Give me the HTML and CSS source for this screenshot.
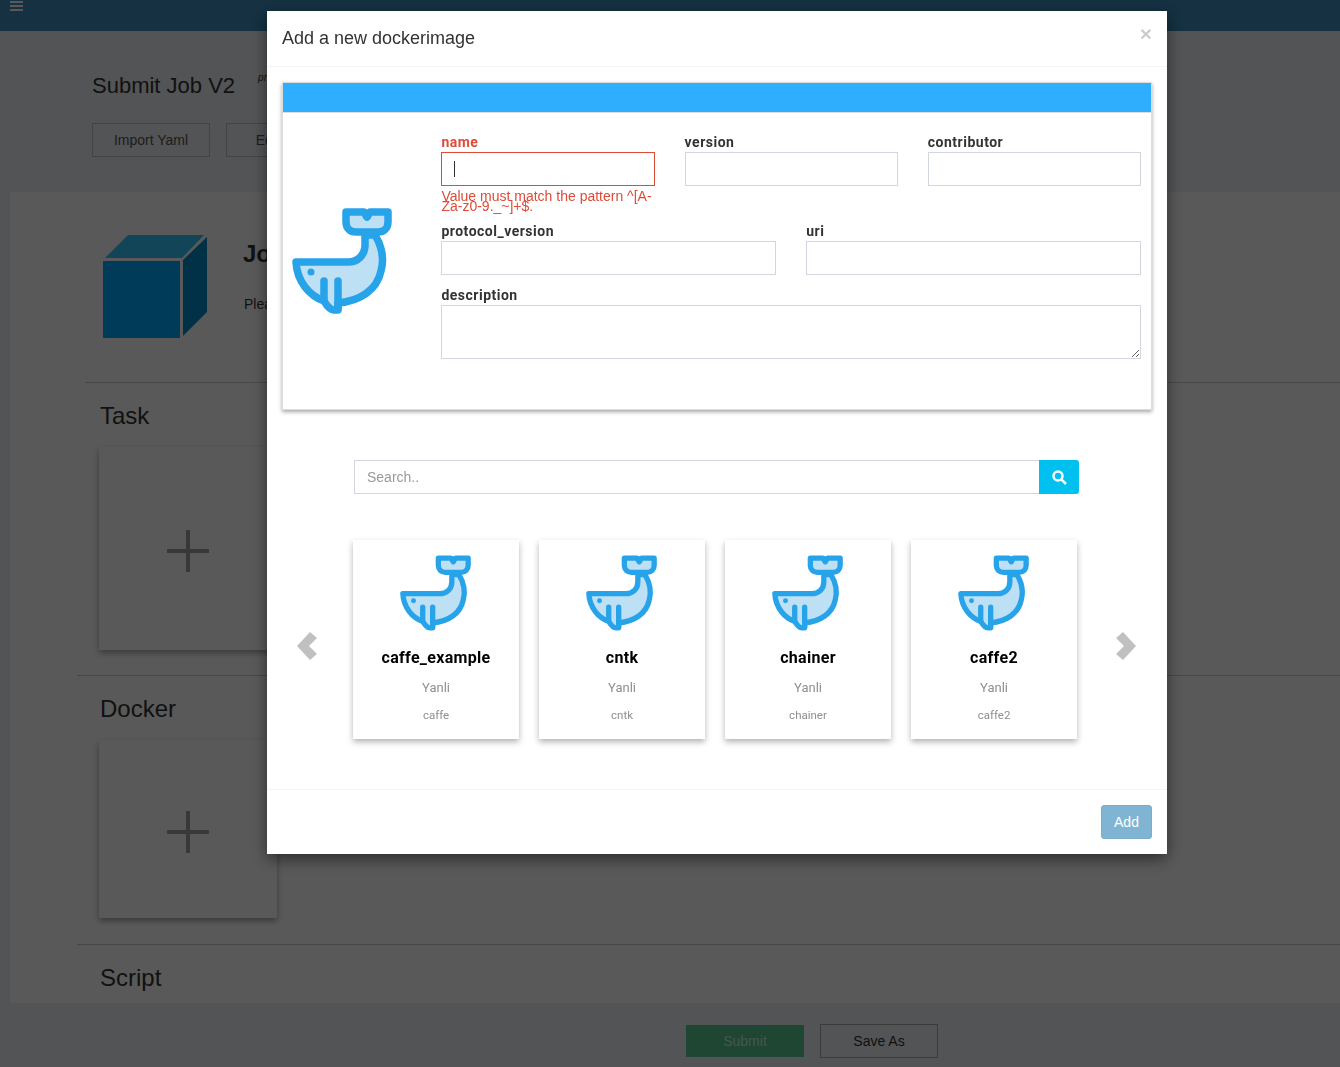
FILE: index.html
```html
<!DOCTYPE html>
<html lang="en">
<head>
    <meta charset="UTF-8">
    <meta name="viewport" content="width=device-width, initial-scale=1.0">
    <title>Submit Job V2</title>
    <link rel="stylesheet" href="styles.css">
</head>
<body>
    <svg class="sprites" aria-hidden="true">
        <symbol id="whale" viewBox="0 0 100 106">
            <path class="whale-part" d="M4 54H56C66 54 73 47 73 37V27H83C91 40 92 52 89 63C85 82 68 93 46 95V102H42C38 102 35 98 32 93C18 88 5 74 4 54Z"/>
            <path class="whale-part" d="M54 4H72C73 4 73 7 75 9C77 7 77 4 78 4H96V14C96 20 92 24 86 24H64C58 24 54 20 54 14Z"/>
            <path class="whale-line" d="M32 73V92M46 73V100"/>
            <circle class="whale-eye" cx="19" cy="64" r="3.5"/>
        </symbol>
        <symbol id="plus" viewBox="0 0 42 42">
            <path d="M0 19H42V23H0ZM19 0H23V42H19Z"/>
        </symbol>
    </svg>

    <div class="page">
        <header class="topbar">
            <div class="hamburger"><span></span><span></span><span></span></div>
        </header>

        <div class="title-row">
            <h1>Submit Job V2</h1>
            <small>preview</small>
        </div>
        <div class="tool-row">
            <button class="btn-line">Import Yaml</button>
            <button class="btn-line">Edit Yaml</button>
        </div>

        <div class="panel">
            <div class="intro">
                <svg class="cube" width="105" height="103" viewBox="0 0 105 103">
                    <polygon class="cube-top" points="3,23 26,0 102,0 80,23"/>
                    <polygon class="cube-front" points="1,26 78,26 78,103 1,103"/>
                    <polygon class="cube-side" points="81,25 105,2 105,77 81,101"/>
                </svg>
                <div class="intro-text">
                    <h2>Job</h2>
                    <p>Please</p>
                </div>
            </div>

            <section class="section section-task">
                <h3>Task</h3>
                <div class="add-card"><svg width="42" height="42"><use href="#plus"/></svg></div>
            </section>
            <section class="section section-docker">
                <h3>Docker</h3>
                <div class="add-card"><svg width="42" height="42"><use href="#plus"/></svg></div>
            </section>
            <section class="section">
                <h3>Script</h3>
            </section>
        </div>

        <div class="actions">
            <button class="btn-submit">Submit</button>
            <button class="btn-line btn-save">Save As</button>
        </div>
    </div>

    <div class="overlay">
        <div class="modal">
            <div class="modal-header">
                <h4>Add a new dockerimage</h4>
                <span class="close">&times;</span>
            </div>

            <div class="modal-body">
                <div class="image-card">
                    <div class="image-card-bar"></div>
                    <div class="image-card-body">
                        <svg class="whale-big" width="100" height="106"><use href="#whale"/></svg>
                        <form class="image-form">
                            <div class="form-row row-3">
                                <div class="field field-error">
                                    <label>name</label>
                                    <div class="input-wrap">
                                        <input type="text">
                                        <span class="caret"></span>
                                    </div>
                                    <p class="error-text">Value must match the pattern ^[A-Za-z0-9._~]+$.</p>
                                </div>
                                <div class="field">
                                    <label>version</label>
                                    <input type="text">
                                </div>
                                <div class="field">
                                    <label>contributor</label>
                                    <input type="text">
                                </div>
                            </div>
                            <div class="form-row row-2">
                                <div class="field">
                                    <label>protocol_version</label>
                                    <input type="text">
                                </div>
                                <div class="field">
                                    <label>uri</label>
                                    <input type="text">
                                </div>
                            </div>
                            <div class="field">
                                <label>description</label>
                                <textarea></textarea>
                            </div>
                        </form>
                    </div>
                </div>

                <div class="search">
                    <input type="text" placeholder="Search..">
                    <button class="search-btn" aria-label="Search">
                        <svg width="15" height="15" viewBox="0 0 15 15">
                            <circle cx="6" cy="6" r="4.500"/>
                            <path d="M9.300 9.300L14 14"/>
                        </svg>
                    </button>
                </div>

                <div class="carousel">
                    <svg class="arrow" width="20" height="28" viewBox="0 0 20 28">
                        <polygon points="13,0 0,14 13,28 20,22 12,14 20,6"/>
                    </svg>
                    <div class="image-list">
                        <div class="image-item">
                            <svg width="71" height="76"><use href="#whale"/></svg>
                            <h5>caffe_example</h5>
                            <div class="item-author">Yanli</div>
                            <div class="item-desc">caffe</div>
                        </div>
                        <div class="image-item">
                            <svg width="71" height="76"><use href="#whale"/></svg>
                            <h5>cntk</h5>
                            <div class="item-author">Yanli</div>
                            <div class="item-desc">cntk</div>
                        </div>
                        <div class="image-item">
                            <svg width="71" height="76"><use href="#whale"/></svg>
                            <h5>chainer</h5>
                            <div class="item-author">Yanli</div>
                            <div class="item-desc">chainer</div>
                        </div>
                        <div class="image-item">
                            <svg width="71" height="76"><use href="#whale"/></svg>
                            <h5>caffe2</h5>
                            <div class="item-author">Yanli</div>
                            <div class="item-desc">caffe2</div>
                        </div>
                    </div>
                    <svg class="arrow arrow-next" width="20" height="28" viewBox="0 0 20 28">
                        <polygon points="7,0 20,14 7,28 0,22 8,14 0,6"/>
                    </svg>
                </div>
            </div>

            <div class="modal-footer">
                <button class="btn-add">Add</button>
            </div>
        </div>
    </div>
</body>
</html>
```

FILE: styles.css
```css
* {
    box-sizing: border-box;
}
html, body {
    height: 100%;
}
body {
    margin: 0;
    overflow: hidden;
    font-family: "Liberation Sans", Arial, sans-serif;
    font-size: 14px;
    color: #333;
    background: #ecf0f5;
}
.sprites {
    display: none;
}
.whale-part {
    fill: #bde0f5;
    stroke: #27a3ea;
    stroke-width: 7.5;
    stroke-linejoin: round;
}
.whale-line {
    fill: none;
    stroke: #27a3ea;
    stroke-width: 7.5;
    stroke-linecap: round;
}
.whale-eye {
    fill: #27a3ea;
}

/* page behind the dialog */
.topbar {
    height: 31px;
    background: #3c8dbc;
}
.hamburger {
    display: flex;
    flex-direction: column;
    gap: 2px;
    width: 13px;
    margin-left: 10px;
    padding-top: 1px;
}
.hamburger span {
    height: 2px;
    background: #fff;
}
.title-row {
    display: flex;
    align-items: flex-start;
    margin: 41px 0 0 92px;
    height: 51px;
}
.title-row h1 {
    margin: 0;
    font-size: 22px;
    font-weight: 400;
    line-height: 27px;
}
.title-row small {
    margin: 0 0 0 23px;
    font-size: 10px;
    font-style: italic;
    line-height: 12px;
}
.tool-row {
    display: flex;
    gap: 16px;
    margin-left: 92px;
}
.btn-line {
    width: 118px;
    height: 34px;
    padding: 0;
    font-family: inherit;
    font-size: 14px;
    color: #555;
    background: transparent;
    border: 1px solid #c4c4c4;
}
.btn-save {
    color: #333;
    border-color: #aaa;
}
.panel {
    height: 811px;
    margin: 35px 0 0 10px;
    background: #fff;
}
.intro {
    display: flex;
    height: 191px;
    margin-left: 75px;
    padding: 43px 0 0 17px;
    border-bottom: 1px solid #ccc;
}
.intro-text {
    margin-left: 37px;
}
.intro-text h2 {
    margin: 2px 0 0 -1px;
    font-size: 24px;
    line-height: 33px;
}
.intro-text p {
    margin: 26px 0 0;
    font-size: 14px;
}
.cube-front {
    fill: #00abff;
}
.cube-top {
    fill: #36c5fb;
}
.cube-side {
    fill: #008ccb;
}
.section {
    margin-left: 67px;
    padding: 19px 0 0 22px;
}
.section-task {
    height: 292px;
}
.section-docker {
    height: 270px;
    border-top: 1px solid #ccc;
    border-bottom: 1px solid #ccc;
}
.section h3 {
    margin: 0;
    font-size: 24px;
    font-weight: 400;
    line-height: 27px;
    text-indent: 1px;
}
.add-card {
    display: flex;
    align-items: center;
    justify-content: center;
    width: 178px;
    height: 203px;
    margin-top: 18px;
    padding-top: 5px;
    background: #fff;
    box-shadow: 0 3px 6px rgba(0, 0, 0, 0.35);
    fill: #a0a0a0;
}
.section-docker .add-card {
    height: 178px;
}
.actions {
    display: flex;
    align-items: center;
    justify-content: center;
    gap: 16px;
    margin-top: 21px;
    padding-left: 284px;
}
.btn-submit {
    width: 118px;
    height: 32px;
    padding: 0;
    font-family: inherit;
    font-size: 14px;
    color: #c5f6dc;
    background: #59c892;
    border: 0;
}

/* dialog */
.overlay {
    position: fixed;
    top: 0;
    right: 0;
    bottom: 0;
    left: 0;
    background: rgba(0, 0, 0, 0.65);
}
.modal {
    width: 900px;
    margin: 11px 0 0 267px;
    background: #fff;
    box-shadow: 0 5px 15px rgba(0, 0, 0, 0.5);
}
.modal-header {
    display: flex;
    align-items: flex-start;
    justify-content: space-between;
    height: 56px;
    padding: 15px;
    border-bottom: 1px solid #f4f4f4;
}
.modal-header h4 {
    margin: 0;
    font-size: 18px;
    font-weight: 400;
    line-height: 25px;
}
.close {
    margin-top: -1px;
    font-size: 21px;
    font-weight: 700;
    line-height: 18px;
    color: #000;
    opacity: 0.2;
}
.modal-body {
    padding: 15px 15px 0;
}
.image-card {
    height: 328px;
    border: 1px solid #ddd;
    box-shadow: 0 2px 4px rgba(0, 0, 0, 0.35);
}
.image-card-bar {
    height: 29px;
    background: #2eaefc;
    border-bottom: 0;
}
.image-card-body {
    display: flex;
    padding: 19px 10px 0 9px;
    border-top: 1px solid #ddd;
}
.whale-big {
    flex: none;
    margin: 76px 49.4px 0 0;
}
.image-form {
    flex: 1;
}
.form-row {
    display: grid;
    gap: 30px;
    margin-bottom: 10px;
}
.row-3 {
    grid-template-columns: repeat(3, 1fr);
}
.row-2 {
    grid-template-columns: repeat(2, 1fr);
}
.field label {
    display: block;
    font-family: Roboto, sans-serif;
    font-size: 14px;
    font-weight: 700;
    line-height: 20px;
    letter-spacing: 0.5px;
    color: #333;
}
.field input,
.field textarea {
    display: block;
    width: 100%;
    height: 34px;
    padding: 6px 12px;
    border: 1px solid #d2d6de;
    border-radius: 0;
    outline: 0;
}
.field textarea {
    height: 54px;
}
.input-wrap {
    position: relative;
}
.caret {
    position: absolute;
    top: 9px;
    left: 13px;
    width: 1px;
    height: 16px;
    background: #333;
}
.field-error label,
.error-text {
    color: #dd4b39;
}
.field-error input {
    border-color: #dd4b39;
}
.error-text {
    margin: 5px 0 0;
    font-size: 14px;
    line-height: 10px;
}
.search {
    display: flex;
    width: 725px;
    margin: 50px 0 0 72px;
}
.search input {
    flex: 1;
    height: 34px;
    padding: 6px 12px;
    font-family: inherit;
    font-size: 14px;
    border: 1px solid #d2d6de;
    border-right: 0;
    outline: 0;
}
.search input::placeholder {
    color: #999;
}
.search-btn {
    display: flex;
    align-items: center;
    justify-content: center;
    width: 40px;
    height: 34px;
    padding: 0;
    background: #00c0ef;
    border: 0;
    border-radius: 0 3px 3px 0;
}
.search-btn circle,
.search-btn path {
    fill: none;
    stroke: #fff;
    stroke-width: 2.500;
}
.carousel {
    display: flex;
    align-items: center;
    margin-top: 46px;
    padding-left: 15px;
}
.arrow {
    flex: none;
    margin-top: 13px;
    fill: #c0c0c0;
}
.arrow-next {
    margin-left: 39px;
}
.image-list {
    display: flex;
    gap: 20px;
    margin-left: 36px;
}
.image-item {
    width: 166px;
    height: 199px;
    padding-top: 15px;
    text-align: center;
    font-family: Roboto, sans-serif;
    color: #8f8f8f;
    background: #fff;
    box-shadow: 0 3px 6px rgba(0, 0, 0, 0.3);
}
.image-item svg {
    display: block;
    margin-left: 47px;
}
.image-item h5 {
    margin: 16px 0 0;
    font-size: 16px;
    font-weight: 700;
    line-height: 22px;
    letter-spacing: 0.3px;
    color: #000;
}
.item-author {
    margin-top: 9px;
    font-size: 13px;
    line-height: 20px;
}
.item-desc {
    margin-top: 7px;
    font-size: 11.5px;
    line-height: 20px;
}
.modal-footer {
    display: flex;
    justify-content: flex-end;
    margin-top: 50px;
    padding: 15px;
    border-top: 1px solid #f4f4f4;
}
.btn-add {
    width: 51px;
    height: 34px;
    padding: 0;
    font-family: inherit;
    font-size: 14px;
    color: #fff;
    background: #3c8dbc;
    border: 1px solid #367fa9;
    border-radius: 3px;
    opacity: 0.65;
}
```
